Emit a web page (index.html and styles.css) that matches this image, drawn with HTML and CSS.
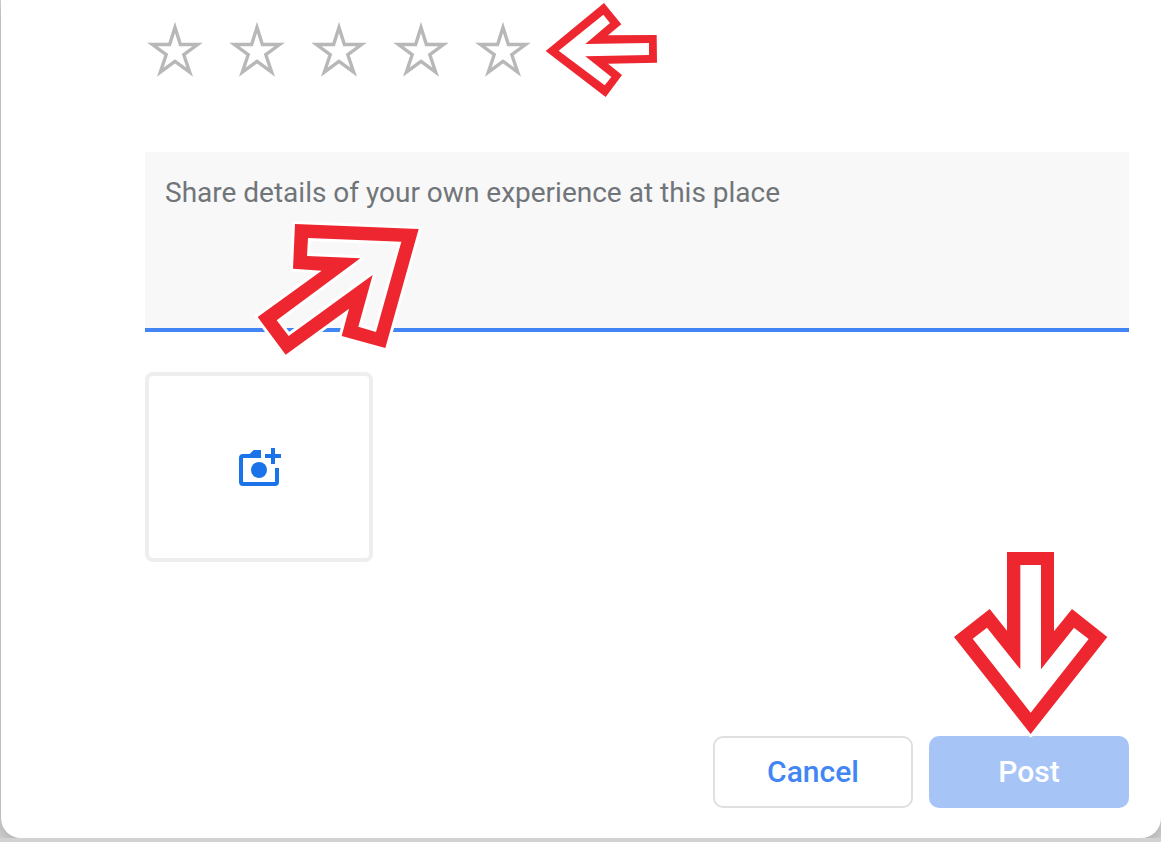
FILE: index.html
```html
<!DOCTYPE html>
<html lang="en">
<head>
    <meta charset="UTF-8">
    <meta name="viewport" content="width=device-width, initial-scale=1.0">
    <title>Write a review</title>
    <link rel="stylesheet" href="styles.css">
</head>
<body>
    <!-- shared shape for the rating buttons -->
    <svg class="symbols" aria-hidden="true">
        <symbol id="star" viewBox="0 0 60 60">
            <path d="M30 7.4L35.4 24.5H52.6L38.8 34.7L44.7 52.2L30 41.3L15.3 52.2L21.2 34.7L7.4 24.5H24.6Z" fill="none" stroke="#b8b8b8" stroke-width="3.4" stroke-miterlimit="10"/>
        </symbol>
    </svg>

    <form class="dialog">
        <div class="rating">
            <button type="button" class="star" aria-label="1 star"><svg><use href="#star"/></svg></button>
            <button type="button" class="star" aria-label="2 stars"><svg><use href="#star"/></svg></button>
            <button type="button" class="star" aria-label="3 stars"><svg><use href="#star"/></svg></button>
            <button type="button" class="star" aria-label="4 stars"><svg><use href="#star"/></svg></button>
            <button type="button" class="star" aria-label="5 stars"><svg><use href="#star"/></svg></button>
            <svg class="arrow arrow-left" viewBox="0 0 630 330" aria-hidden="true">
                <path d="M432 9L484 73L444 106L590 105L591 188L444 191L486 225L437 291L257 153ZM430 44L296 152L434 256L454 231L376 169L567 165L567 129L376 132L450 69Z"/>
            </svg>
        </div>

        <div class="review">
            <textarea class="review-text" aria-label="Your review" placeholder="Share details of your own experience at this place"></textarea>
            <svg class="arrow arrow-up" viewBox="0 0 600 480" aria-hidden="true">
                <path d="M165 42L536 57L436 414L305 378L327 296L137 434L53 321L245 182L159 176ZM204 84L201 138L361 145L110 331L146 378L398 195L355 350L408 366L484 95Z"/>
            </svg>
        </div>

        <button type="button" class="add-photo" aria-label="Add photos">
            <svg viewBox="30 24 144 144">
                <path d="M54 57H74L86 45H108V69H54V141H150V99H162V141Q162 153 150 153H54Q42 153 42 141V69Q42 57 54 57Z"/>
                <path d="M138 39H150V57H168V69H150V87H138V69H120V57H138Z"/>
                <circle cx="102" cy="105" r="24"/>
            </svg>
        </button>

        <div class="actions">
            <button type="button" class="btn cancel">Cancel</button>
            <div class="post-wrap">
                <button type="submit" class="btn post">Post</button>
                <svg class="arrow arrow-down" viewBox="0 0 540 600" aria-hidden="true">
                    <path d="M201 36H342V274L396 207L502 291L272 582L42 291L149 207L201 272ZM241 75V388L141 263L98 296L272 518L446 297L402 263L303 388V75Z"/>
                </svg>
            </div>
        </div>
    </form>
</body>
</html>
```
FILE: styles.css
```css
* {
    box-sizing: border-box;
}

body {
    margin: 0;
    background: #d2d2d2;
    font-family: Roboto, Arial, sans-serif;
    overflow: hidden;
}

button {
    padding: 0;
    border: none;
    background: none;
    font-family: inherit;
    cursor: pointer;
}

.symbols {
    display: none;
}

.dialog {
    display: flex;
    flex-direction: column;
    min-height: calc(100vh - 4px);
    margin-left: 1px;
    padding: 20px 32px 30px 144px;
    background: #fff;
    border-radius: 0 0 20px 20px;
    box-shadow: 0 4px 16px rgba(0, 0, 0, 0.2);
}

/* Stars */
.rating {
    position: relative;
    display: flex;
    gap: 22px;
    margin-bottom: 72px;
}

.star,
.star svg {
    display: block;
    width: 60px;
    height: 60px;
}

/* Review text */
.review {
    position: relative;
    margin-bottom: 40px;
}

.review-text {
    display: block;
    width: 100%;
    height: 180px;
    padding: 24px 20px;
    border: none;
    border-bottom: 4px solid #4285f4;
    border-radius: 0;
    background: #f8f8f8;
    font-family: inherit;
    font-size: 28px;
    line-height: 34px;
    color: #202124;
    outline: none;
    resize: none;
}

.review-text::placeholder {
    color: #70757a;
}

.add-photo {
    display: flex;
    align-items: center;
    justify-content: center;
    width: 228px;
    height: 190px;
    border: 4px solid #eee;
    border-radius: 8px;
}

.add-photo svg {
    width: 48px;
    height: 48px;
    fill: #1a73e8;
}

/* Buttons */
.actions {
    display: flex;
    justify-content: flex-end;
    gap: 16px;
    margin-top: auto;
}

.btn {
    display: block;
    width: 200px;
    height: 72px;
    padding-bottom: 2px;
    border-radius: 10px;
    font-size: 30px;
    font-weight: 500;
}

.cancel {
    border: 2px solid #e0e0e0;
    color: #4285f4;
}

.post {
    background: #a6c5f6;
    color: #fff;
}

.post-wrap {
    position: relative;
}

/* Red arrows over the form */
.arrow {
    position: absolute;
    overflow: visible;
    pointer-events: none;
    fill: #ee262f;
    fill-rule: evenodd;
    stroke: #fff;
    stroke-width: 18;
    stroke-linejoin: round;
    paint-order: stroke;
}

.arrow-left {
    left: 315px;
    top: -20px;
    width: 210px;
}

.arrow-up {
    left: 95px;
    top: 58px;
    width: 200px;
}

.arrow-down {
    left: 11px;
    bottom: 68px;
    width: 180px;
}
```
